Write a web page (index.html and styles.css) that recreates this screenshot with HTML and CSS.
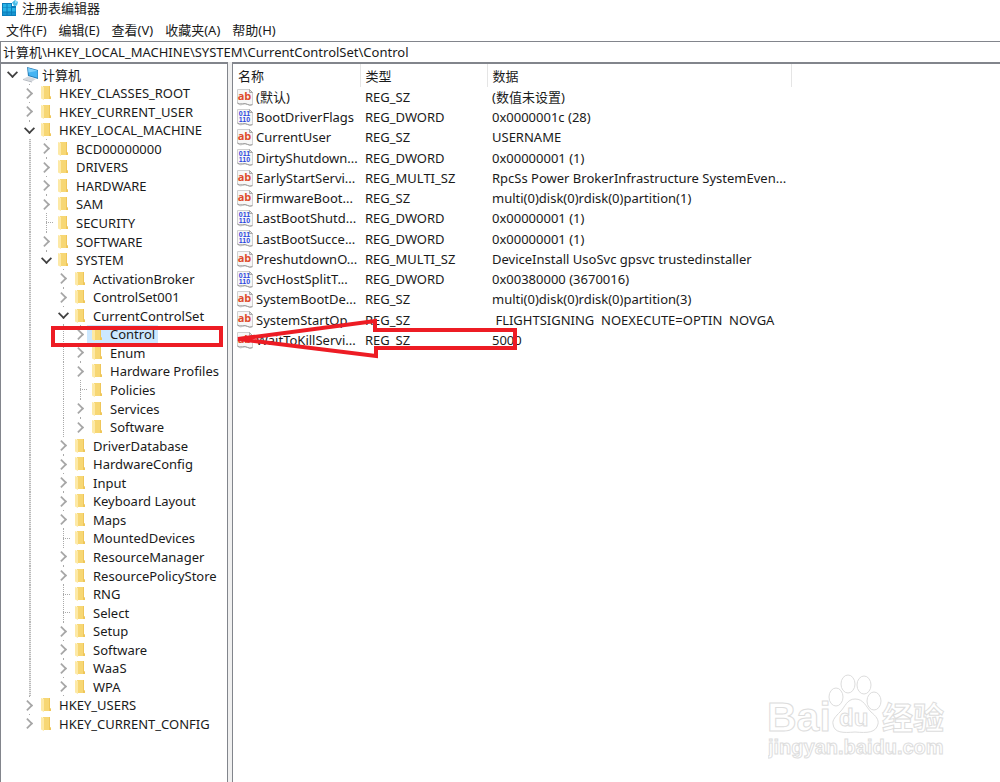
FILE: index.html
```html
<!DOCTYPE html>
<html lang="zh-CN">
	<head>
		<meta charset="utf-8">
		<meta name="viewport" content="width=device-width, initial-scale=1">
		<title>注册表编辑器</title>
		<link rel="stylesheet" href="styles.css">
	</head>

	<body>
		<!-- shared icons -->
		<svg class="defs" width="0" height="0" aria-hidden="true">
			<symbol id="folder" viewBox="0 0 12 14">
				<path d="M3 0h7v10l1 1v2H3z" fill="#f7d774"/>
				<path d="M9 0h1v10l1 1v2H9z" fill="#efc65a"/>
				<path d="M1 0l3 1v13L1 12.500z" fill="#fde9a6"/>
			</symbol>
			<symbol id="computer" viewBox="0 0 16 16">
				<path d="M4 0l11 3v9L5 9z" fill="#2b7fb8"/>
				<path d="M5 1l9.500 2.700v7L6 8.300z" fill="#45b4f3"/>
				<path d="M5 1l9.500 2.700L5.500 5.500z" fill="#7fd0fb"/>
				<path d="M0 12l5-2.500 8 2.500-4 2.500z" fill="#d5d9de"/>
				<path d="M0 12l9 2.500v1L0 13z" fill="#b3b8bf"/>
			</symbol>
			<symbol id="page" viewBox="0 0 17 17">
				<path d="M.5 .5h12l3 3v12q-2 1.500-5 0t-5 0-5-1z" fill="#f7f7f7" stroke="#d0d0d0"/>
				<path d="M.5 14q2 1.500 5 .8t5 .6 5 .3" fill="none" stroke="#999"/>
				<path d="M12.500 .5v3h3z" fill="#ddd" stroke="#aaa"/>
			</symbol>
		</svg>

		<header class="titlebar">
			<svg width="17" height="17" viewBox="0 0 17 17" aria-hidden="true">
				<path d="M1 3h10v3h4v10H1z" fill="#0b7dbb"/>
				<path d="M2 4h3.500v3.500H2zM6.500 4H10v3.500H6.500zM2 8h3.500v3.500H2zM6.500 8H10v3.500H6.500zM11 8h3.500v3.500H11z" fill="#29b3e6"/>
				<path d="M2 12.500h3.500V15H2zM6.500 12.500H10V15H6.500zM11 12.500h3.500V15H11z" fill="#1795d0"/>
				<path d="M11 2.500L14 0l3 2-1 3.500-3 .5z" fill="#49bce8"/>
				<path d="M14 0l3 2-3 1.500z" fill="#8edcf7"/>
			</svg>
			<span>注册表编辑器</span>
		</header>

		<nav class="menu">
			<button>文件(F)</button>
			<button>编辑(E)</button>
			<button>查看(V)</button>
			<button>收藏夹(A)</button>
			<button>帮助(H)</button>
		</nav>

		<input class="address" type="text" aria-label="地址" value="计算机\HKEY_LOCAL_MACHINE\SYSTEM\CurrentControlSet\Control">

		<main class="panes">
			<ul class="tree">
				<li class="d0"><button class="toggle open" aria-label="折叠"></button><svg class="pc"><use href="#computer"/></svg><span>计算机</span></li>
				<li class="d1"><button class="toggle" aria-label="展开"></button><svg><use href="#folder"/></svg><span>HKEY_CLASSES_ROOT</span></li>
				<li class="d1"><button class="toggle" aria-label="展开"></button><svg><use href="#folder"/></svg><span>HKEY_CURRENT_USER</span></li>
				<li class="d1"><button class="toggle open" aria-label="折叠"></button><svg><use href="#folder"/></svg><span>HKEY_LOCAL_MACHINE</span></li>
				<li class="d2"><button class="toggle" aria-label="展开"></button><svg><use href="#folder"/></svg><span>BCD00000000</span></li>
				<li class="d2"><button class="toggle" aria-label="展开"></button><svg><use href="#folder"/></svg><span>DRIVERS</span></li>
				<li class="d2"><button class="toggle" aria-label="展开"></button><svg><use href="#folder"/></svg><span>HARDWARE</span></li>
				<li class="d2"><button class="toggle" aria-label="展开"></button><svg><use href="#folder"/></svg><span>SAM</span></li>
				<li class="d2"><i class="stub"></i><svg><use href="#folder"/></svg><span>SECURITY</span></li>
				<li class="d2"><button class="toggle" aria-label="展开"></button><svg><use href="#folder"/></svg><span>SOFTWARE</span></li>
				<li class="d2"><button class="toggle open" aria-label="折叠"></button><svg><use href="#folder"/></svg><span>SYSTEM</span></li>
				<li class="d3"><button class="toggle" aria-label="展开"></button><svg><use href="#folder"/></svg><span>ActivationBroker</span></li>
				<li class="d3"><button class="toggle" aria-label="展开"></button><svg><use href="#folder"/></svg><span>ControlSet001</span></li>
				<li class="d3"><button class="toggle open" aria-label="折叠"></button><svg><use href="#folder"/></svg><span>CurrentControlSet</span></li>
				<li class="d4 selected"><button class="toggle" aria-label="展开"></button><svg><use href="#folder"/></svg><span>Control</span></li>
				<li class="d4"><button class="toggle" aria-label="展开"></button><svg><use href="#folder"/></svg><span>Enum</span></li>
				<li class="d4"><button class="toggle" aria-label="展开"></button><svg><use href="#folder"/></svg><span>Hardware Profiles</span></li>
				<li class="d4"><i class="stub"></i><svg><use href="#folder"/></svg><span>Policies</span></li>
				<li class="d4"><button class="toggle" aria-label="展开"></button><svg><use href="#folder"/></svg><span>Services</span></li>
				<li class="d4"><button class="toggle" aria-label="展开"></button><svg><use href="#folder"/></svg><span>Software</span></li>
				<li class="d3"><button class="toggle" aria-label="展开"></button><svg><use href="#folder"/></svg><span>DriverDatabase</span></li>
				<li class="d3"><button class="toggle" aria-label="展开"></button><svg><use href="#folder"/></svg><span>HardwareConfig</span></li>
				<li class="d3"><button class="toggle" aria-label="展开"></button><svg><use href="#folder"/></svg><span>Input</span></li>
				<li class="d3"><button class="toggle" aria-label="展开"></button><svg><use href="#folder"/></svg><span>Keyboard Layout</span></li>
				<li class="d3"><button class="toggle" aria-label="展开"></button><svg><use href="#folder"/></svg><span>Maps</span></li>
				<li class="d3"><i class="stub"></i><svg><use href="#folder"/></svg><span>MountedDevices</span></li>
				<li class="d3"><button class="toggle" aria-label="展开"></button><svg><use href="#folder"/></svg><span>ResourceManager</span></li>
				<li class="d3"><button class="toggle" aria-label="展开"></button><svg><use href="#folder"/></svg><span>ResourcePolicyStore</span></li>
				<li class="d3"><i class="stub"></i><svg><use href="#folder"/></svg><span>RNG</span></li>
				<li class="d3"><i class="stub"></i><svg><use href="#folder"/></svg><span>Select</span></li>
				<li class="d3"><button class="toggle" aria-label="展开"></button><svg><use href="#folder"/></svg><span>Setup</span></li>
				<li class="d3"><button class="toggle" aria-label="展开"></button><svg><use href="#folder"/></svg><span>Software</span></li>
				<li class="d3"><button class="toggle" aria-label="展开"></button><svg><use href="#folder"/></svg><span>WaaS</span></li>
				<li class="d3"><button class="toggle" aria-label="展开"></button><svg><use href="#folder"/></svg><span>WPA</span></li>
				<li class="d1"><button class="toggle" aria-label="展开"></button><svg><use href="#folder"/></svg><span>HKEY_USERS</span></li>
				<li class="d1"><button class="toggle" aria-label="展开"></button><svg><use href="#folder"/></svg><span>HKEY_CURRENT_CONFIG</span></li>
			</ul>

			<section class="values">
				<table>
					<thead>
						<tr><th class="name">名称</th><th class="type">类型</th><th class="data">数据</th><th></th></tr>
					</thead>
					<tbody>
						<tr><td><div class="value"><span class="icon ab"><svg><use href="#page"/></svg><b>ab</b></span>(默认)</div></td><td>REG_SZ</td><td>(数值未设置)</td></tr>
						<tr><td><div class="value"><span class="icon bin"><svg><use href="#page"/></svg><b>011<br>110</b></span>BootDriverFlags</div></td><td>REG_DWORD</td><td>0x0000001c (28)</td></tr>
						<tr><td><div class="value"><span class="icon ab"><svg><use href="#page"/></svg><b>ab</b></span>CurrentUser</div></td><td>REG_SZ</td><td>USERNAME</td></tr>
						<tr><td><div class="value"><span class="icon bin"><svg><use href="#page"/></svg><b>011<br>110</b></span>DirtyShutdown...</div></td><td>REG_DWORD</td><td>0x00000001 (1)</td></tr>
						<tr><td><div class="value"><span class="icon ab"><svg><use href="#page"/></svg><b>ab</b></span>EarlyStartServi...</div></td><td>REG_MULTI_SZ</td><td>RpcSs Power BrokerInfrastructure SystemEven...</td></tr>
						<tr><td><div class="value"><span class="icon ab"><svg><use href="#page"/></svg><b>ab</b></span>FirmwareBoot...</div></td><td>REG_SZ</td><td>multi(0)disk(0)rdisk(0)partition(1)</td></tr>
						<tr><td><div class="value"><span class="icon bin"><svg><use href="#page"/></svg><b>011<br>110</b></span>LastBootShutd...</div></td><td>REG_DWORD</td><td>0x00000001 (1)</td></tr>
						<tr><td><div class="value"><span class="icon bin"><svg><use href="#page"/></svg><b>011<br>110</b></span>LastBootSucce...</div></td><td>REG_DWORD</td><td>0x00000001 (1)</td></tr>
						<tr><td><div class="value"><span class="icon ab"><svg><use href="#page"/></svg><b>ab</b></span>PreshutdownO...</div></td><td>REG_MULTI_SZ</td><td>DeviceInstall UsoSvc gpsvc trustedinstaller</td></tr>
						<tr><td><div class="value"><span class="icon bin"><svg><use href="#page"/></svg><b>011<br>110</b></span>SvcHostSplitT...</div></td><td>REG_DWORD</td><td>0x00380000 (3670016)</td></tr>
						<tr><td><div class="value"><span class="icon ab"><svg><use href="#page"/></svg><b>ab</b></span>SystemBootDe...</div></td><td>REG_SZ</td><td>multi(0)disk(0)rdisk(0)partition(3)</td></tr>
						<tr><td><div class="value"><span class="icon ab"><svg><use href="#page"/></svg><b>ab</b></span>SystemStartOp...</div></td><td>REG_SZ</td><td>&nbsp;FLIGHTSIGNING&nbsp; NOEXECUTE=OPTIN&nbsp; NOVGA</td></tr>
						<tr><td><div class="value"><span class="icon ab"><svg><use href="#page"/></svg><b>ab</b></span>WaitToKillServi...</div></td><td>REG_SZ</td><td>5000</td></tr>
					</tbody>
				</table>
			</section>
		</main>

		<!-- red marks over the selected key and its value -->
		<svg class="marks" width="530" height="370" viewBox="0 0 530 370" aria-hidden="true">
			<path d="M53 328h168v17H53z"/>
			<path d="M238 339L375 321v9h140v18H376v8z"/>
		</svg>

		<svg class="watermark" width="200" height="100" viewBox="0 0 200 100" aria-hidden="true">
			<text x="-1" y="60" class="brand">Bai</text>
			<ellipse cx="68" cy="26" rx="7" ry="9"/>
			<ellipse cx="80" cy="13" rx="7" ry="9"/>
			<ellipse cx="96" cy="14" rx="7" ry="9"/>
			<ellipse cx="106" cy="30" rx="7" ry="9"/>
			<path d="M87 28c9 0 11 8 16 13 5 4 8 8 7 12-2 9-11 9-23 8-12 1-21 1-22-8-1-4 3-8 7-12 5-5 7-13 15-13z"/>
			<text x="71" y="55" class="du">du</text>
			<text x="114" y="58" class="cn">经验</text>
			<text x="0" y="83" class="site">jingyan.baidu.com</text>
		</svg>
	</body>
</html>
```
FILE: styles.css
```css
* {
	box-sizing: border-box;
}

body {
	position: relative;
	display: flex;
	flex-direction: column;
	min-height: 100vh;
	margin: 0;
	background-color: #fff;
	color: #1a1a1a;
	font: 13px/18px "Noto Sans", "Noto Sans CJK SC", sans-serif;
}

button, input {
	font: inherit;
	color: inherit;
	border: 0;
	padding: 0;
	background: none;
}

.defs {
	position: absolute;
}

.titlebar {
	display: flex;
	gap: 4px;
	height: 18px;
	padding-left: 1px;
	line-height: 16px;
}

.menu {
	display: flex;
	gap: 12px;
	height: 23px;
	padding: 3px 6px;
}

.address {
	width: 100%;
	height: 21px;
	padding: 0 0 1px 2px;
	border-top: 1px solid #82858c;
	border-left: 1px solid #82858c;
}

.panes {
	display: flex;
	flex: 1;
	background-color: #f0f0f0;
}

/* tree */
.tree {
	display: grid;
	flex: none;
	width: 228px;
	align-content: start;
	grid-auto-rows: 19px 18px 19px 18px 19px 18px 19px 18px 19px;
	margin: 0;
	padding: 1px 0 0;
	border: 1px solid #82858c;
	border-top-width: 2px;
	border-bottom: 0;
	background-color: #fff;
	list-style: none;
}

.tree li {
	--dots: repeating-linear-gradient(#aaa 0 1px, transparent 1px 2px);
	--rail: repeating-linear-gradient(#bbb 0 1px, #eee 1px 2px);
	display: flex;
	align-items: center;
	background-repeat: no-repeat;
	white-space: nowrap;
}

.tree .d0 { padding-left: 4px; }

.tree .d1 {
	padding-left: 21px;
	background-image: var(--dots);
	background-size: 1px 100%;
	background-position: 28px 0;
}

.tree .d2 {
	padding-left: 38px;
	background-image: var(--rail), var(--dots);
	background-size: 2px 100%, 1px 100%;
	background-position: 28px 0, 45px 0;
}

.tree .d3 {
	padding-left: 55px;
	background-image: var(--rail), var(--dots);
	background-size: 2px 100%, 1px 100%;
	background-position: 28px 0, 62px 0;
}

.tree .d4 {
	padding-left: 72px;
	background-image: var(--rail), var(--dots), var(--dots);
	background-size: 2px 100%, 1px 100%, 1px 100%;
	background-position: 28px 0, 62px 0, 79px 0;
}

/* the guide stops at the last key */
.tree li:last-child {
	background-size: 1px 50%;
}

.toggle {
	display: flex;
	align-items: center;
	justify-content: center;
	flex: none;
	width: 14px;
	height: 16px;
	background-color: #fff;
}

.toggle::before {
	content: "";
	width: 7px;
	height: 7px;
	margin-left: -3px;
	border: solid #a6a6a6;
	border-width: 2px 2px 0 0;
	transform: rotate(45deg) scale(.86);
}

.toggle.open::before {
	margin: -4px 0 0;
	border-color: #404040;
	transform: rotate(135deg) scale(.86);
}

.stub {
	flex: none;
	width: 7px;
	height: 1px;
	margin-left: 7px;
	background: repeating-linear-gradient(90deg, #aaa 0 1px, transparent 1px 2px);
}

.tree svg {
	flex: none;
	box-sizing: content-box;
	width: 12px;
	height: 14px;
	padding: 2px 7px 2px 4px;
}

.tree .pc {
	width: 16px;
	height: 16px;
	padding: 0 3px 0 4px;
}

.selected svg,
.selected span {
	background-color: #cce8ff;
}

.selected span {
	padding-right: 3px;
}

/* values */
.values {
	flex: 1;
	min-width: 0;
	margin-left: 4px;
	border-top: 2px solid #82858c;
	border-left: 1px solid #82858c;
	background-color: #fff;
}

table {
	width: 100%;
	table-layout: fixed;
	border-collapse: collapse;
}

th, td {
	padding: 0 0 0 5px;
	font-weight: normal;
	text-align: left;
	white-space: nowrap;
}

th {
	height: 23px;
	border-right: 1px solid #e5e5e5;
}

th:last-child {
	border-right: 0;
}

.name { width: 127px; }
.type { width: 127px; }
.data { width: 304px; }

tbody tr {
	height: 20px;
}

tbody tr:nth-child(4n) {
	height: 21px;
}

td:first-child {
	padding-left: 4px;
}

.value {
	display: flex;
	align-items: center;
	gap: 2px;
}

.icon {
	display: grid;
	width: 17px;
	height: 17px;
}

.icon svg,
.icon b {
	grid-area: 1 / 1;
	width: 17px;
	height: 17px;
}

.icon b {
	padding-right: 2px;
	text-align: center;
}

.ab {
	color: #de4b2c;
	font: 11px/13px "Open Sans", sans-serif;
}

.bin {
	color: #2a45e0;
	font: 7px/6px "Liberation Sans", sans-serif;
}

.bin b {
	padding-top: 2px;
}

/* overlays */
.marks {
	position: absolute;
	top: 0;
	left: 0;
	fill: none;
	stroke: #ed1c24;
	stroke-width: 4px;
	pointer-events: none;
}

.watermark {
	position: absolute;
	right: 32px;
	bottom: 11px;
	fill: #fff;
	stroke: #ddd;
	stroke-width: 1px;
	pointer-events: none;
}

.brand {
	font: bold 41px "Liberation Sans", sans-serif;
}

.du {
	font: bold 24px "Liberation Sans", sans-serif;
}

.cn {
	font: bold 31px "Noto Sans CJK SC", sans-serif;
}

.site {
	font: bold 20px "Liberation Sans", sans-serif;
}
```
